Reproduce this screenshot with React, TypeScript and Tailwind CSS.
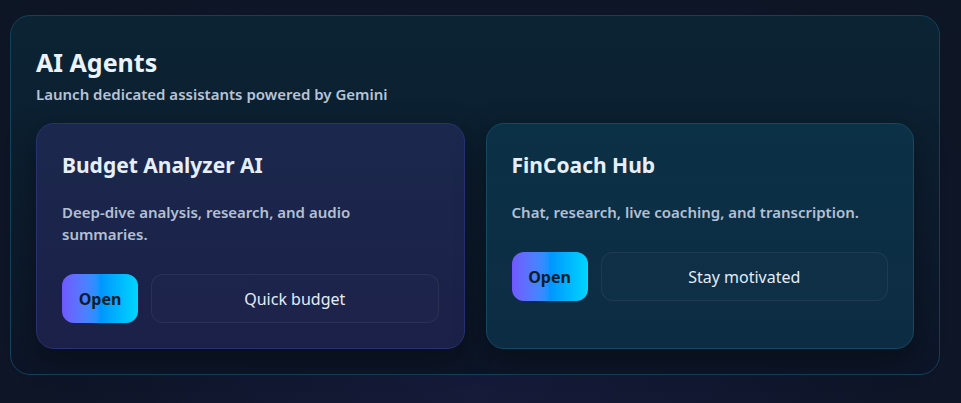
import React from "react";

function AgentCard({
  title,
  desc,
  action,
  variant,
}: {
  title: string;
  desc: string;
  action: string;
  variant: "navy" | "teal";
}) {
  const cardCls =
    variant === "navy"
      ? "border-[#283270] bg-gradient-to-b from-[#1b284d] to-[#1b2048] shadow-[0_10px_30px_rgba(0,0,0,0.35)]"
      : "border-[#124a62] bg-gradient-to-b from-[#0b3146] to-[#0d2c44] shadow-[0_10px_30px_rgba(0,0,0,0.35)]";
  return (
    <div className={`flex-1 rounded-[18px] border px-[25px] pt-[27px] pb-[25px] ${cardCls}`}>
      <h3 className="text-[21px] font-bold leading-[28px] text-[#e6eefb]">{title}</h3>
      <p className="mt-[22px] max-w-[355px] text-[15px] font-semibold leading-[22px] text-[#b3c0d4]">{desc}</p>
      <div className="mt-[29px] flex gap-[13px]">
        <button className="h-[49px] w-[76px] rounded-[12px] bg-gradient-to-r from-[#7057ff] via-[#0095ff] to-[#00d6ff] text-[16px] font-bold text-[#0a1e2c]">
          Open
        </button>
        <button className="h-[49px] flex-1 rounded-[12px] border border-[#ffffff10] bg-[#ffffff03] text-[16px] font-normal text-[#e4ecf7]">
          {action}
        </button>
      </div>
    </div>
  );
}

export default function App() {
  return (
    <div
      className="min-h-[403px] w-full bg-[radial-gradient(ellipse_at_50%_90%,#161b3a_0%,#0e1528_60%,#0d1624_100%)] pl-[10px] pr-[21px] pt-[15px] pb-[28px]"
      style={{ fontFamily: '"Noto Sans", "Open Sans", sans-serif' }}
    >
      <div className="rounded-[20px] border border-[#12425a] bg-gradient-to-b from-[#0b2434] to-[#0c1527] px-[25px] pt-[30px] pb-[25px]">
        <h2 className="text-[25px] font-bold leading-[32px] text-[#eaf2fc]">AI Agents</h2>
        <p className="mt-[5px] text-[15px] font-semibold leading-[22px] text-[#b7c4d6]">
          Launch dedicated assistants powered by Gemini
        </p>
        <div className="mt-[18px] flex items-stretch gap-[21px]">
          <AgentCard
            title="Budget Analyzer AI"
            desc="Deep-dive analysis, research, and audio summaries."
            action="Quick budget"
            variant="navy"
          />
          <AgentCard
            title="FinCoach Hub"
            desc="Chat, research, live coaching, and transcription."
            action="Stay motivated"
            variant="teal"
          />
        </div>
      </div>
    </div>
  );
}
